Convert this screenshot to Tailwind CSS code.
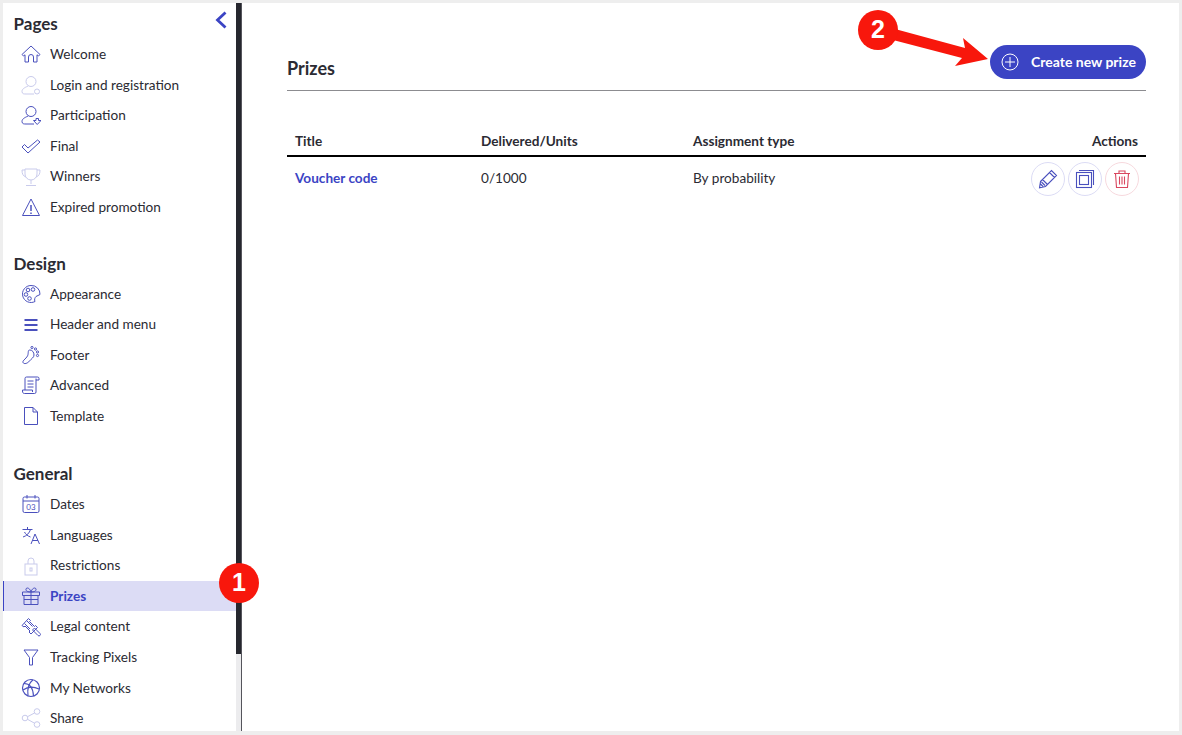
<!DOCTYPE html>
<html lang="en">

<head>
    <meta charset="UTF-8">
    <meta name="viewport" content="width=device-width, initial-scale=1.0">
    <title>Prizes</title>
    <script src="https://cdn.jsdelivr.net/npm/@tailwindcss/browser@4"></script>
</head>

<body class="relative h-[735px] w-[1182px] overflow-hidden bg-[#eeeeee] p-[3px] font-['Lato','Open_Sans',sans-serif] text-[#2b2b33]">
    <div class="flex h-[728px] w-[1176px] overflow-hidden bg-white">
        <!-- sidebar -->
        <aside class="relative h-full w-[239px] shrink-0 overflow-hidden border-r border-[#55555c] pr-[5px]">
            <button class="absolute left-[211px] top-[8px] text-[#3b44c4]">
                <svg class="h-[18px] w-[14px]" viewBox="0 0 14 18" fill="none" stroke="currentColor" stroke-width="2.800"><path d="M11.500 1.500 3.500 9l8 7.500" /></svg>
            </button>
            <div class="absolute right-0 top-0 h-full w-[5px] bg-[#ececee]">
                <div class="h-[651px] w-[5px] bg-[#26272e]"></div>
            </div>

            <section class="pt-[5px]">
                <h2 class="flex h-[31px] items-center pl-[10.5px] text-[17px] font-bold">Pages</h2>
                <ul>
                    <li class="flex h-[30.6px] items-center gap-[9px] pl-[18px] text-[13.6px]">
                        <svg class="h-[20px] w-[20px] shrink-0 text-[#4a50bd]" viewBox="0 0 20 20" fill="none" stroke="currentColor" stroke-width="1"><path d="M10 2 1 10.500l1.500 1.500L4 10.800V18h3.500v-5a2.500 2.500 0 0 1 5 0v5H16v-7.200l1.500 1.200 1.500-1.500z" /></svg>
                        Welcome
                    </li>
                    <li class="flex h-[30.6px] items-center gap-[9px] pl-[18px] text-[13.6px]">
                        <svg class="h-[20px] w-[20px] shrink-0 text-[#c9cbec]" viewBox="0 0 20 20" fill="none" stroke="currentColor" stroke-width="1"><circle cx="10" cy="6.500" r="5" /><path d="M7 11C3 13 1 14 1 16.500S3 19 5 19h8" /><circle cx="16" cy="16.500" r="2.500" /></svg>
                        Login and registration
                    </li>
                    <li class="flex h-[30.6px] items-center gap-[9px] pl-[18px] text-[13.6px]">
                        <svg class="h-[20px] w-[20px] shrink-0 text-[#4a50bd]" viewBox="0 0 20 20" fill="none" stroke="currentColor" stroke-width="1"><circle cx="10" cy="6.500" r="5" /><path d="M7 11C3 13 1 14 1 16.500S3 19 5 19h8" /><path d="M12.500 15.500h2.500v-2h2.500v2H20L16.200 19.500z" /></svg>
                        Participation
                    </li>
                    <li class="flex h-[30.6px] items-center gap-[9px] pl-[18px] text-[13.6px]">
                        <svg class="h-[20px] w-[20px] shrink-0 text-[#4a50bd]" viewBox="0 0 20 20" fill="none" stroke="currentColor" stroke-width="1"><path d="M1 11l2.500-2.500 3.500 3.500 9.500-8L19 6 7 17z" /></svg>
                        Final
                    </li>
                    <li class="flex h-[30.6px] items-center gap-[9px] pl-[18px] text-[13.6px]">
                        <svg class="h-[20px] w-[20px] shrink-0 text-[#c9cbec]" viewBox="0 0 20 20" fill="none" stroke="currentColor" stroke-width="1"><path d="M4 2h12v5a6 6 0 0 1-12 0zM4 3H1c0 4 1 6 4 7M16 3h3c0 4-1 6-4 7M10 13v4M5 18.500h10" /></svg>
                        Winners
                    </li>
                    <li class="flex h-[30.6px] items-center gap-[9px] pl-[18px] text-[13.6px]">
                        <svg class="h-[20px] w-[20px] shrink-0 text-[#4a50bd]" viewBox="0 0 20 20" fill="none" stroke="currentColor" stroke-width="1"><path d="M10 2 1.500 18.500h17z" /><path d="M10 8v6M10 15.500v1.500" stroke-width="1.500" /></svg>
                        Expired promotion
                    </li>
                </ul>
            </section>

            <section class="pt-[25.5px]">
                <h2 class="flex h-[31px] items-center pl-[10.5px] text-[17px] font-bold">Design</h2>
                <ul>
                    <li class="flex h-[30.4px] items-center gap-[9px] pl-[18px] text-[13.6px]">
                        <svg class="h-[20px] w-[20px] shrink-0 text-[#4a50bd]" viewBox="0 0 20 20" fill="none" stroke="currentColor" stroke-width="1"><path d="M10 1.500a8.500 8.500 0 1 0 4 16c-1-2 0-4 1-5s3-1 4-2a8.500 8.500 0 0 0-9-9z" /><circle cx="7" cy="6" r="1.800" /><circle cx="12" cy="5.500" r="1.800" /><circle cx="5" cy="10.500" r="1.800" /><circle cx="8.500" cy="14.500" r="1.800" /></svg>
                        Appearance
                    </li>
                    <li class="flex h-[30.4px] items-center gap-[9px] pl-[18px] text-[13.6px]">
                        <svg class="h-[20px] w-[20px] shrink-0 text-[#4a50bd]" viewBox="0 0 20 20" fill="none" stroke="currentColor" stroke-width="1.800"><path d="M3.500 5h13M3.500 10h13M3.500 15h13" /></svg>
                        Header and menu
                    </li>
                    <li class="flex h-[30.4px] items-center gap-[9px] pl-[18px] text-[13.6px]">
                        <svg class="h-[20px] w-[20px] shrink-0 text-[#4a50bd]" viewBox="0 0 20 20" fill="none" stroke="currentColor" stroke-width="1"><path d="M9 5c2.500 0 4 2.500 4 5s-2.500 3.500-4.500 6-5.500 3.500-6.500 1.500S6.500 13 7 9.500 7 5 9 5z" /><circle cx="11" cy="2.500" r="1.100" /><circle cx="14.500" cy="4" r="1.100" /><circle cx="16.500" cy="7" r="1.100" /><circle cx="16.500" cy="10.500" r="1.100" /></svg>
                        Footer
                    </li>
                    <li class="flex h-[30.4px] items-center gap-[9px] pl-[18px] text-[13.6px]">
                        <svg class="h-[20px] w-[20px] shrink-0 text-[#4a50bd]" viewBox="0 0 20 20" fill="none" stroke="currentColor" stroke-width="1"><path d="M4 15V3.500A1.500 1.500 0 0 1 5.500 2h11A1.500 1.500 0 0 1 18 3.500V5h-3M15 3.500V17a1.500 1.500 0 0 1-1.500 1.500h-10C2 18.500 1.500 17.500 1.500 16V15h10v2M6.500 6h6M6.500 9h6M6.500 12h6" /></svg>
                        Advanced
                    </li>
                    <li class="flex h-[30.4px] items-center gap-[9px] pl-[18px] text-[13.6px]">
                        <svg class="h-[20px] w-[20px] shrink-0 text-[#4a50bd]" viewBox="0 0 20 20" fill="none" stroke="currentColor" stroke-width="1"><path d="M3.500 1.500h8.500l4.500 4.500v12.500h-13zM12 1.500V6h4.500" /></svg>
                        Template
                    </li>
                </ul>
            </section>

            <section class="pt-[27px]">
                <h2 class="flex h-[31px] items-center pl-[10.5px] text-[17px] font-bold">General</h2>
                <ul>
                    <li class="flex h-[30.6px] items-center gap-[9px] pl-[18px] text-[13.6px]">
                        <svg class="h-[20px] w-[20px] shrink-0 text-[#4a50bd]" viewBox="0 0 20 20" fill="none" stroke="currentColor" stroke-width="1"><rect x="2" y="3" width="16" height="15.500" rx="1.500" /><path d="M2 7h16M6 1v3.500M14 1v3.500" /><text x="10" y="15.500" text-anchor="middle" font-size="8" fill="currentColor" stroke="none">03</text></svg>
                        Dates
                    </li>
                    <li class="flex h-[30.6px] items-center gap-[9px] pl-[18px] text-[13.6px]">
                        <svg class="h-[20px] w-[20px] shrink-0 text-[#4a50bd]" viewBox="0 0 20 20" fill="none" stroke="currentColor" stroke-width="1"><path d="M1.500 4.500h10M6.500 2v2.500M9.500 4.500C8.500 8 5.500 11 2 12M3.500 7c1 2 3 4 6 5M10 19l4-10 4.500 10M11.500 15.500h5.500" /></svg>
                        Languages
                    </li>
                    <li class="flex h-[30.6px] items-center gap-[9px] pl-[18px] text-[13.6px]">
                        <svg class="h-[20px] w-[20px] shrink-0 text-[#c9cbec]" viewBox="0 0 20 20" fill="none" stroke="currentColor" stroke-width="1"><rect x="4" y="8" width="12" height="11" /><path d="M7 8V5a3 3 0 0 1 6 0v3" /><rect x="9" y="12" width="2" height="3" /></svg>
                        Restrictions
                    </li>
                    <li class="flex h-[30.6px] items-center gap-[9px] border-l border-[#3b44c4] bg-[#dcdcf5] pl-[17px] text-[13.6px] font-bold text-[#3b44c4]">
                        <svg class="h-[20px] w-[20px] shrink-0 text-[#4a50bd]" viewBox="0 0 20 20" fill="none" stroke="currentColor" stroke-width="1"><path d="M1.500 6h17v3.500h-17zM3 9.500h14V18.500H3zM10 6v12.500M3 13.500h14M10 6C7 6 4.500 5 5 3s4-1 5 3c1-4 4.500-5 5-3s-2 3-5 3z" /></svg>
                        Prizes
                    </li>
                    <li class="flex h-[30.6px] items-center gap-[9px] pl-[18px] text-[13.6px]">
                        <svg class="h-[20px] w-[20px] shrink-0 text-[#4a50bd]" viewBox="0 0 20 20" fill="none" stroke="currentColor" stroke-width="1"><path d="M1 8.500 7.500 1.500l2 2-1 1 5 5 1-1 2 2L10 17l-2-2 1-1-5-5-1 1zM11.500 13l2-2 5.500 5.500a1.400 1.400 0 0 1-2 2zM3.500 6.500l5.500 5.500M6 4l5.500 5.500" /></svg>
                        Legal content
                    </li>
                    <li class="flex h-[30.6px] items-center gap-[9px] pl-[18px] text-[13.6px]">
                        <svg class="h-[20px] w-[20px] shrink-0 text-[#4a50bd]" viewBox="0 0 20 20" fill="none" stroke="currentColor" stroke-width="1"><path d="M3 3h14l-5.500 7.500V18h-3v-7.500z" /></svg>
                        Tracking Pixels
                    </li>
                    <li class="flex h-[30.6px] items-center gap-[9px] pl-[18px] text-[13.6px]">
                        <svg class="h-[20px] w-[20px] shrink-0 text-[#4a50bd]" viewBox="0 0 20 20" fill="none" stroke="currentColor" stroke-width="1.200"><circle cx="10" cy="10" r="8.500" /><path d="M3 5.500c5 0 9 4 9.500 12.500M12 1.800C8 5 6 10 7 17.500M2 12c4-3 10-4 16-1" /></svg>
                        My Networks
                    </li>
                    <li class="flex h-[30.6px] items-center gap-[9px] pl-[18px] text-[13.6px]">
                        <svg class="h-[20px] w-[20px] shrink-0 text-[#c9cbec]" viewBox="0 0 20 20" fill="none" stroke="currentColor" stroke-width="1"><circle cx="4" cy="10" r="2.800" /><circle cx="16" cy="3.500" r="2.800" /><circle cx="16" cy="16.500" r="2.800" /><path d="M6.500 8.700 13.500 5M6.500 11.300l7 3.900" /></svg>
                        Share
                    </li>
                </ul>
            </section>
        </aside>

        <!-- main -->
        <main class="flex-1 pl-[45px] pr-[33px] pt-[42px]">
            <div class="flex h-[46px] items-start justify-between border-b border-[#8c8c90]">
                <h1 class="pt-[13px] text-[18px] font-bold leading-[20px]">Prizes</h1>
                <button class="flex h-[34px] w-[156px] items-center gap-[12px] rounded-full bg-[#3b44c4] pl-[11px] text-[14px] font-bold text-white">
                    <svg class="h-[18px] w-[18px]" viewBox="0 0 18 18" fill="none" stroke="currentColor" stroke-width="1"><circle cx="9" cy="9" r="8" /><path d="M9 4v10M4 9h10" /></svg>
                    <span class="pb-[2px]">Create new prize</span>
                </button>
            </div>

            <table class="mt-[38px] w-full table-fixed text-[13.6px]">
                <thead>
                    <tr class="h-[27px] border-b-2 border-black text-left">
                        <th class="w-[194px] pb-[2px] pl-2 font-bold">Title</th>
                        <th class="w-[212px] pb-[2px] font-bold">Delivered/Units</th>
                        <th class="pb-[2px] font-bold">Assignment type</th>
                        <th class="pb-[2px] pr-2 text-right font-bold">Actions</th>
                    </tr>
                </thead>
                <tbody>
                    <tr class="h-[44px]">
                        <td class="pl-2 font-bold text-[#3b44c4]">Voucher code</td>
                        <td>0/1000</td>
                        <td>By probability</td>
                        <td class="pr-[7px]">
                            <div class="flex justify-end gap-[3px]">
                                <span class="flex h-[34px] w-[34px] items-center justify-center rounded-full border border-[#dcdcf5] text-[#4a50bd]">
                                    <svg class="h-[20px] w-[20px]" viewBox="0 0 20 20" fill="none" stroke="currentColor" stroke-width="1.100"><path d="M2.500 12.500 13.500 1.500 18.500 6.500 7.500 17.500 1.500 18.800zM11.500 3.500l5 5M4.500 10.500l5 5M2.500 15l2.500 2.500M3.500 13l3.500 3.500" /></svg>
                                </span>
                                <span class="flex h-[34px] w-[34px] items-center justify-center rounded-full border border-[#dcdcf5] text-[#4a50bd]">
                                    <svg class="h-[20px] w-[20px]" viewBox="0 0 20 20" fill="none" stroke="currentColor" stroke-width="1.100"><rect x="1.500" y="3.500" width="15" height="15" /><rect x="4.500" y="6.500" width="9" height="9" /><path d="M4 1.500h14.500V16" /></svg>
                                </span>
                                <span class="flex h-[34px] w-[34px] items-center justify-center rounded-full border border-[#f7d9de] text-[#d9475f]">
                                    <svg class="h-[20px] w-[20px]" viewBox="0 0 20 20" fill="none" stroke="currentColor" stroke-width="1.100"><path d="M2 4.500h16M7 4.500V2h6v2.500M3.500 4.500 4.500 18.500h11l1-14M7.500 7.500v8M10 7.500v8M12.500 7.500v8" /></svg>
                                </span>
                            </div>
                        </td>
                    </tr>
                </tbody>
            </table>
        </main>
    </div>

    <!-- annotations -->
    <svg class="absolute left-[880px] top-[20px] h-[60px] w-[112px]" viewBox="0 0 112 60" fill="#f8170c">
        <path d="M15 9 85 28 83 18 108 39 75 46 82 38 13 20z" />
    </svg>
    <span class="absolute left-[858px] top-[10px] flex h-[40px] w-[40px] items-center justify-center rounded-full bg-[#f8170c] font-['Liberation_Sans',sans-serif] text-[25px] font-bold text-white">2</span>
    <span class="absolute left-[219px] top-[563px] flex h-[40px] w-[40px] items-center justify-center rounded-full bg-[#f8170c] font-['Liberation_Sans',sans-serif] text-[25px] font-bold text-white">1</span>
</body>

</html>
